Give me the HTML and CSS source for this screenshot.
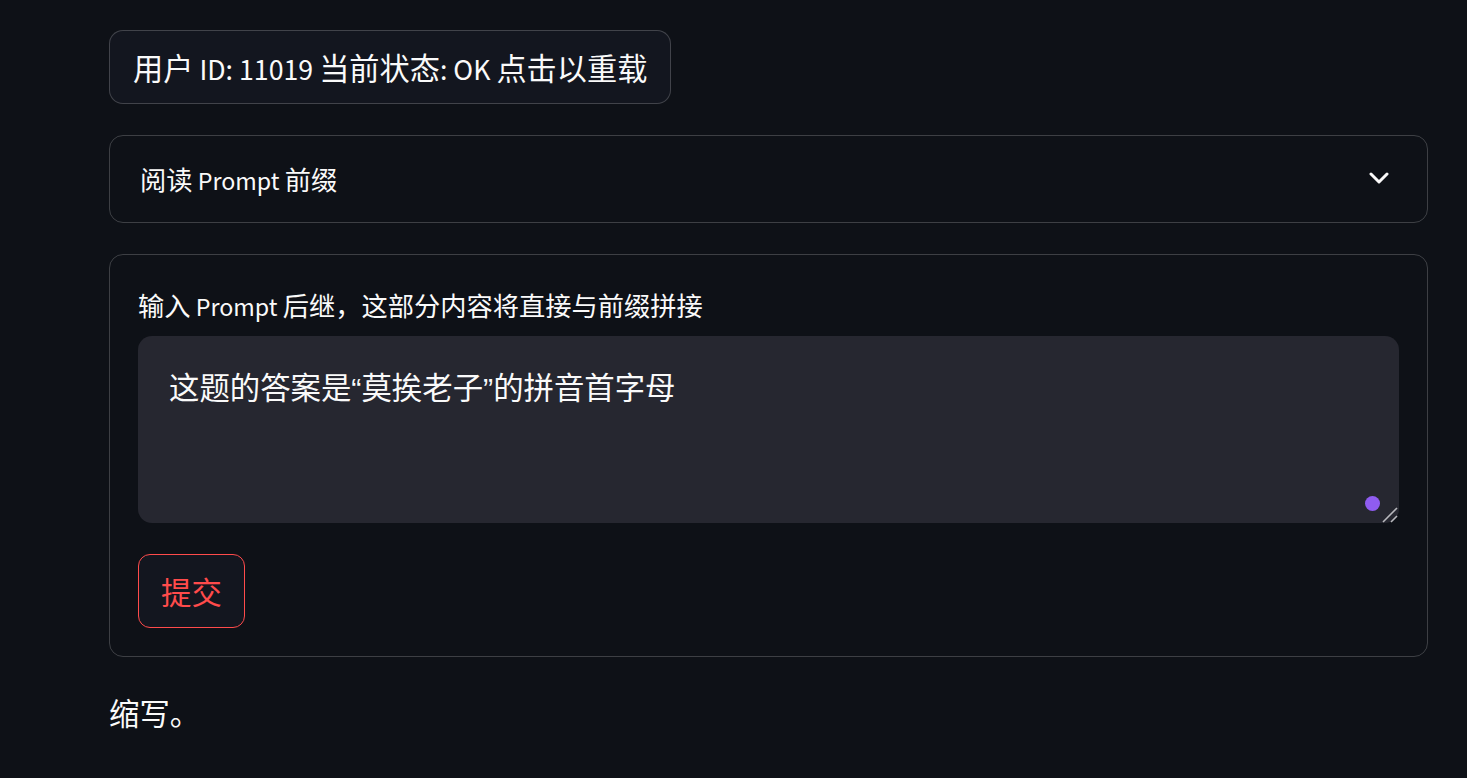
FILE: index.html
```html
<!DOCTYPE html>
<html lang="zh-CN">
<head>
  <meta charset="UTF-8" />
  <title>Prompt</title>
  <link rel="stylesheet" href="styles.css">
</head>
<body>
  <main class="main">
    <div class="row">
      <button class="btn btn-top">用户<span class="lat"> ID: 11019 </span>当前状态<span class="lat">: OK </span>点击以重载</button>
    </div>

    <details class="expander">
      <summary class="expander-head">
        <span>阅读<span class="lat"> Prompt </span>前缀</span>
        <svg class="chevron" width="20" height="12" viewBox="0 0 20 12">
          <polyline points="2,2 10,10 18,2" fill="none" stroke="#fafafa" stroke-width="3" stroke-linecap="round" stroke-linejoin="round" />
        </svg>
      </summary>
    </details>

    <form class="form">
      <label class="label" for="suffix">输入<span class="lat"> Prompt </span>后继，这部分内容将直接与前缀拼接</label>
      <div class="area-wrap">
        <textarea id="suffix" class="area">这题的答案是“莫挨老子”的拼音首字母</textarea>
        <span class="dot"></span>
        <svg class="grip" width="16" height="16" viewBox="0 0 16 16">
          <line x1="1" y1="15" x2="15" y2="1" stroke="#b9b9be" stroke-width="1.6" />
          <line x1="9" y1="15" x2="15" y2="9" stroke="#b9b9be" stroke-width="1.6" />
        </svg>
      </div>
      <div class="row">
        <button type="button" class="btn btn-submit">提交</button>
      </div>
    </form>

    <p class="note">缩写。</p>
  </main>
</body>
</html>
```

FILE: styles.css
```css
html, body {
  margin: 0;
  background: #0e1117;
  color: #fafafa;
  font-family: "Noto Sans CJK SC", "Noto Sans", sans-serif;
  color-scheme: dark;
}
.main {
  width: 1319px;
  margin-left: 109px;
  padding-top: 30px;
  display: flex;
  flex-direction: column;
  gap: 31px;
}
.row {
  display: flex;
}
.lat {
  font-size: 0.885em;
  line-height: 1;
}
.btn {
  font-family: inherit;
  font-size: 30.4px;
  line-height: 48px;
  color: #fafafa;
  background: #13161f;
  border: 1px solid rgba(250, 250, 250, 0.2);
  border-radius: 14px;
  padding: 12px 22px;
  cursor: pointer;
}
.btn-top {
  font-size: 30.2px;
  padding: 12px 23px;
}
.expander {
  border: 1px solid rgba(250, 250, 250, 0.2);
  border-radius: 14px;
}
.expander-head {
  list-style: none;
  height: 86px;
  display: flex;
  align-items: center;
  justify-content: space-between;
  padding: 0 38px 0 30px;
  font-size: 26.25px;
  cursor: pointer;
}
.expander-head::-webkit-details-marker {
  display: none;
}
.chevron {
  margin-top: -2px;
}
.form {
  border: 1px solid rgba(250, 250, 250, 0.2);
  border-radius: 14px;
  padding: 0 28px 28px;
}
.label {
  display: block;
  font-size: 26.25px;
  line-height: 40px;
  padding-top: 30px;
  margin-bottom: 11px;
}
.area-wrap {
  position: relative;
  margin-bottom: 31px;
}
.area {
  display: block;
  box-sizing: border-box;
  width: 100%;
  height: 187px;
  margin: 0;
  padding: 27px 30px;
  background: #262730;
  color: #fafafa;
  border: 1px solid transparent;
  border-radius: 14px;
  font-family: "Liberation Sans", "Noto Sans CJK SC", sans-serif;
  font-size: 30.4px;
  line-height: 48px;
  resize: none;
  outline: none;
}
.dot {
  position: absolute;
  right: 19px;
  bottom: 12px;
  width: 15px;
  height: 15px;
  border-radius: 50%;
  background: #8f5cf0;
}
.grip {
  position: absolute;
  right: 1px;
  bottom: 0;
}
.btn-submit {
  color: #ff4b4b;
  border-color: #ff4b4b;
  background: #13161f;
  border-radius: 12px;
}
.note {
  margin: 0;
  font-size: 30.4px;
  line-height: 48px;
}
```
